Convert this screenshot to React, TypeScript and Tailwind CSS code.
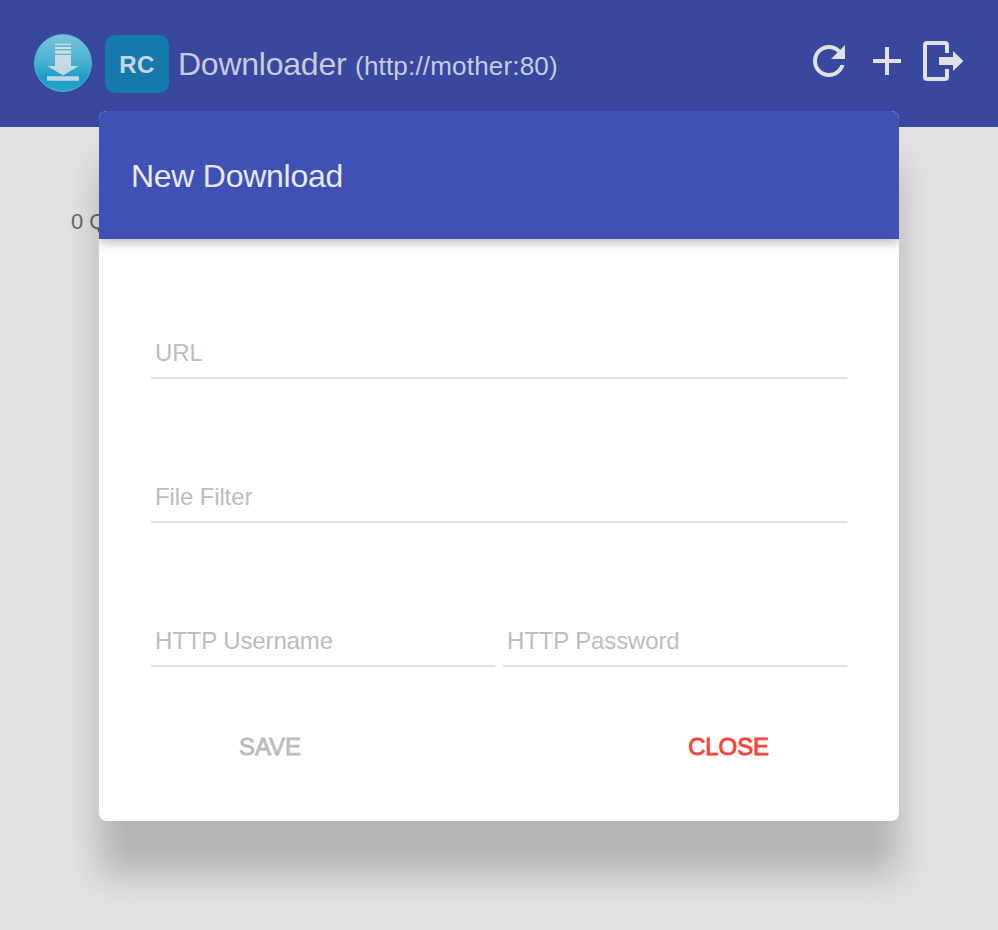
import React from "react";

function Logo() {
  return (
    <svg className="block h-[60px] w-[60px] shrink-0" viewBox="33 33 60 60">
      <defs>
        <linearGradient id="disc" x1="0" y1="0" x2="0" y2="1">
          <stop offset="0" stopColor="#7cc3da" />
          <stop offset="0.5" stopColor="#47b0d1" />
          <stop offset="0.75" stopColor="#1d9cc8" />
          <stop offset="1" stopColor="#27a3ca" />
        </linearGradient>
        <linearGradient id="arrow" gradientUnits="userSpaceOnUse" x1="0" y1="43" x2="0" y2="81">
          <stop offset="0" stopColor="#cfdfe6" />
          <stop offset="1" stopColor="#bdd6e0" />
        </linearGradient>
      </defs>
      <circle cx="63" cy="63" r="28.5" fill="url(#disc)" stroke="#5fb8d3" strokeWidth="0.8" />
      <path
        fill="url(#arrow)"
        d="M55 43.8h16v1.2H55zM55 47h16v2H55zM55 50.4h16v3.4H55zM55 55h16v11h7.6L63 75.6 47.4 66H55zM47 76.2h32v4.6H47z"
      />
    </svg>
  );
}

function IconButton({ label, children }: { label: string; children: React.ReactNode }) {
  return (
    <button aria-label={label} className="h-12 w-12 shrink-0">
      <svg className="block h-12 w-12" viewBox="0 0 24 24" fill="#e1e1e1">
        {children}
      </svg>
    </button>
  );
}

function Field({ label }: { label: string }) {
  return (
    <label className="block h-[60px] flex-1 border-b-2 border-[#e0e0e0] pt-[20px] pl-1 text-[24px] leading-[28px] tracking-[-0.13px] text-[#bcbcbc]">
      {label}
    </label>
  );
}

export default function App() {
  return (
    <div className="relative h-[930px] w-[998px] overflow-hidden bg-[#e1e1e1] font-['Liberation_Sans',Arial,sans-serif]">
      <header className="flex h-[127px] items-start bg-[#38489f] pl-[33px] text-[#c8cbdd]">
        <div className="flex h-[127px] items-start pt-[33px]">
          <Logo />
          <div className="mt-[2px] ml-3 flex h-[58px] w-16 items-center justify-center rounded-[10px] bg-[#1579ac] pt-[2px] text-[24px] font-bold tracking-[0.4px] text-[#c4d7e1]">
            RC
          </div>
          <h1 className="mt-[13px] ml-[9px] text-[32px] leading-[36px] tracking-[-0.24px] whitespace-nowrap">
            Downloader <span className="text-[26px] tracking-[0.19px]">(http://mother:80)</span>
          </h1>
        </div>
        <nav className="mr-[29px] ml-auto flex gap-[10px] pt-[37px]">
          <IconButton label="Refresh">
            <path d="M17.65 6.35C16.2 4.9 14.21 4 12 4c-4.42 0-7.99 3.58-7.99 8s3.57 8 7.99 8c3.73 0 6.84-2.55 7.73-6h-2.08c-.82 2.33-3.04 4-5.65 4-3.31 0-6-2.69-6-6s2.69-6 6-6c1.66 0 3.14.69 4.22 1.78L13 11h7V4l-2.35 2.35z" />
          </IconButton>
          <IconButton label="Add">
            <path d="M19 13h-6v6h-2v-6H5v-2h6V5h2v6h6v2z" />
          </IconButton>
          <IconButton label="Sign out">
            <path d="M3 2h9a2 2 0 0 1 2 2v4h-2V4H3v16h9v-4h2v4a2 2 0 0 1-2 2H3a2 2 0 0 1-2-2V4a2 2 0 0 1 2-2zM9 10h7V7l5.2 5L16 17v-3H9z" />
          </IconButton>
        </nav>
      </header>
      <main className="pt-[82px] pl-[71px] text-[22px] leading-[26px] text-[#666666]">0 Queued</main>

      <section
        role="dialog"
        className="absolute top-[111px] left-[99px] flex h-[710px] w-[800px] flex-col overflow-hidden rounded-lg bg-white shadow-[0_54px_34px_0_rgba(0,0,0,0.2)]"
      >
        <div className="flex h-32 shrink-0 items-center bg-[#3f51b5] px-8 pt-[2px] text-[32px] tracking-[-0.27px] text-[#e7e9f6] shadow-[0_4px_10px_0_rgba(0,0,0,0.26)]">
          New Download
        </div>
        <div className="flex flex-col gap-[84px] px-[52px] pt-[80px]">
          <div className="flex">
            <Field label="URL" />
          </div>
          <div className="flex">
            <Field label="File Filter" />
          </div>
          <div className="flex gap-2">
            <Field label="HTTP Username" />
            <Field label="HTTP Password" />
          </div>
        </div>
        <div className="mt-[66px] flex justify-between pr-[130px] pl-[140px] text-[24px] leading-[28px] tracking-[-0.1px]">
          <button className="text-[#bcbcbc] [-webkit-text-stroke:0.8px_#bcbcbc]">SAVE</button>
          <button className="text-[#f44336] [-webkit-text-stroke:0.8px_#f44336]">CLOSE</button>
        </div>
      </section>
    </div>
  );
}
